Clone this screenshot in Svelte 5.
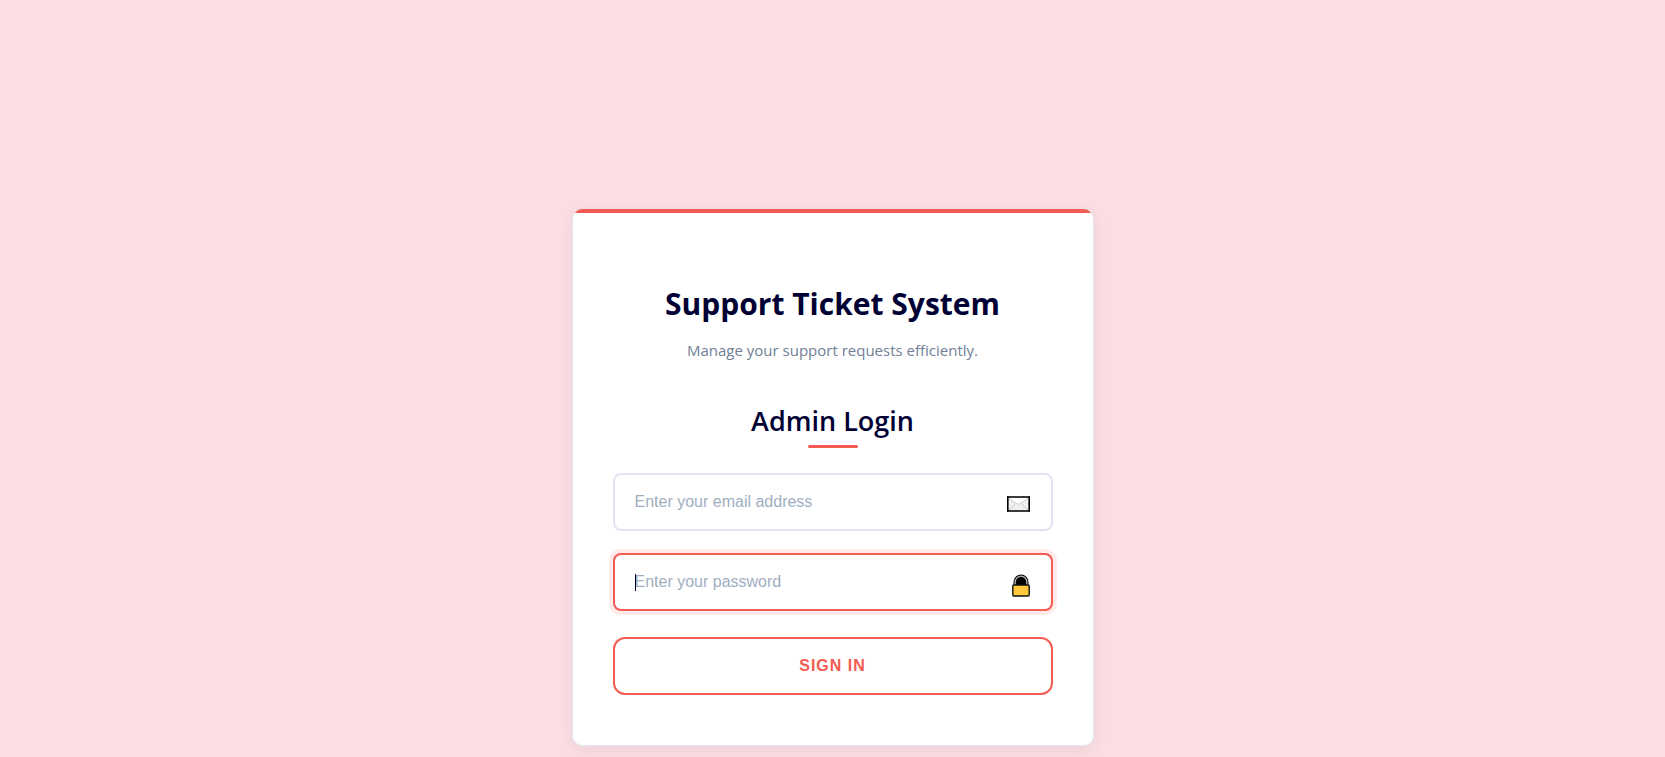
<script>
  let email = $state('');
  let password = $state('');
</script>

<main class="page">
  <section class="card">
    <header>
      <h1>Support Ticket System</h1>
      <p>Manage your support requests efficiently.</p>
    </header>
    <h2>Admin Login</h2>
    <form onsubmit={(e) => e.preventDefault()}>
      <div class="field">
        <input type="email" aria-label="Email address" placeholder="Enter your email address" bind:value={email} />
        <svg class="icon mail" viewBox="0 0 23 16" width="23" height="16" aria-hidden="true">
          <rect x="1" y="1" width="21" height="14" fill="#f0f0f0" />
          <path d="M2 2H21L11.5 8.5Z" fill="#fff" />
          <path d="M2 2.5L9.5 7.5Q11.5 9 13.5 7.5L21 2.5M2 14L8.5 8M21 14L14.5 8" fill="none" stroke="#cccccc" stroke-width="1" />
          <path d="M0 1H23M0 15H23" stroke="#3a3a3a" stroke-width="2" />
          <path d="M0.8 0.5V15.5M22.2 0.5V15.5" stroke="#000" stroke-width="1.6" />
        </svg>
      </div>
      <div class="field active">
        <input type="password" aria-label="Password" placeholder="Enter your password" bind:value={password} />
        <span class="caret" aria-hidden="true"></span>
        <svg class="icon lock" viewBox="0 0 18 23" width="18" height="23" aria-hidden="true">
          <path d="M1.5 12V8A7.5 7.5 0 0 1 16.5 8V12Z" fill="#000" />
          <path d="M3.2 11V8A5.8 5.8 0 0 1 14.8 8V11" fill="none" stroke="#b8b8b8" stroke-width="1.3" />
          <rect x="0.8" y="11" width="16.4" height="11" rx="1.2" fill="#ffc83d" stroke="#111" stroke-width="1.4" />
        </svg>
      </div>
      <button type="submit">Sign In</button>
    </form>
  </section>
</main>

<style>
  :global(body) {
    margin: 0;
    background: #fadee3;
  }
  .page {
    display: flex;
    justify-content: center;
    padding: 209px 20px 12px;
    font-family: 'Segoe UI', 'Open Sans', 'Noto Sans', sans-serif;
    color: #000033;
  }
  .card {
    box-sizing: border-box;
    position: relative;
    width: 100%;
    max-width: 522px;
    padding: 71px 40px 50px;
    background: #fff;
    border: 1px solid #e2e8f0;
    border-top: 0;
    border-radius: 10px;
    overflow: hidden;
    box-shadow: 0 4px 16px rgba(0, 0, 0, 0.06);
    text-align: center;
  }
  .card::before {
    content: '';
    position: absolute;
    top: 0;
    left: 0;
    right: 0;
    height: 4px;
    background: #f45b52;
  }
  h1 {
    margin: 0 0 14px;
    font-size: 30px;
    line-height: 48px;
    font-weight: 700;
  }
  p {
    margin: 0;
    font-size: 15px;
    line-height: 16px;
    color: #718096;
  }
  h2 {
    margin: 41px 0 25px;
    font-size: 27px;
    line-height: 44px;
    font-weight: 600;
  }
  h2::after {
    content: '';
    display: block;
    width: 50px;
    height: 3px;
    margin: 2px auto 0;
    border-radius: 2px;
    background: #f45b52;
  }
  .field {
    position: relative;
    margin-bottom: 22px;
  }
  input {
    box-sizing: border-box;
    display: block;
    width: 100%;
    height: 58px;
    padding: 0 60px 0 20px;
    border: 2px solid #e1e5f2;
    border-radius: 8px;
    background: #fff;
    font: 16px 'Liberation Sans', Arial, sans-serif;
    color: #000033;
    outline: none;
  }
  input::placeholder {
    color: #a0aec0;
    opacity: 1;
  }
  .active {
    margin-bottom: 26px;
  }
  .active input,
  input:focus {
    border-color: #f45b52;
    box-shadow: 0 0 0 4px rgba(244, 91, 82, 0.12);
  }
  .caret {
    position: absolute;
    left: 22px;
    top: 21px;
    width: 1px;
    height: 17px;
    background: #000033;
  }
  .active:focus-within .caret {
    display: none;
  }
  .icon {
    position: absolute;
    right: 23px;
  }
  .mail {
    top: 23px;
  }
  .lock {
    top: 21px;
  }
  button {
    display: block;
    width: 100%;
    height: 58px;
    padding: 0;
    border: 2px solid #f45b52;
    border-radius: 12px;
    background: #fff;
    color: #f45b52;
    font: 700 16px 'Liberation Sans', Arial, sans-serif;
    letter-spacing: 1px;
    text-transform: uppercase;
    cursor: pointer;
  }
</style>
